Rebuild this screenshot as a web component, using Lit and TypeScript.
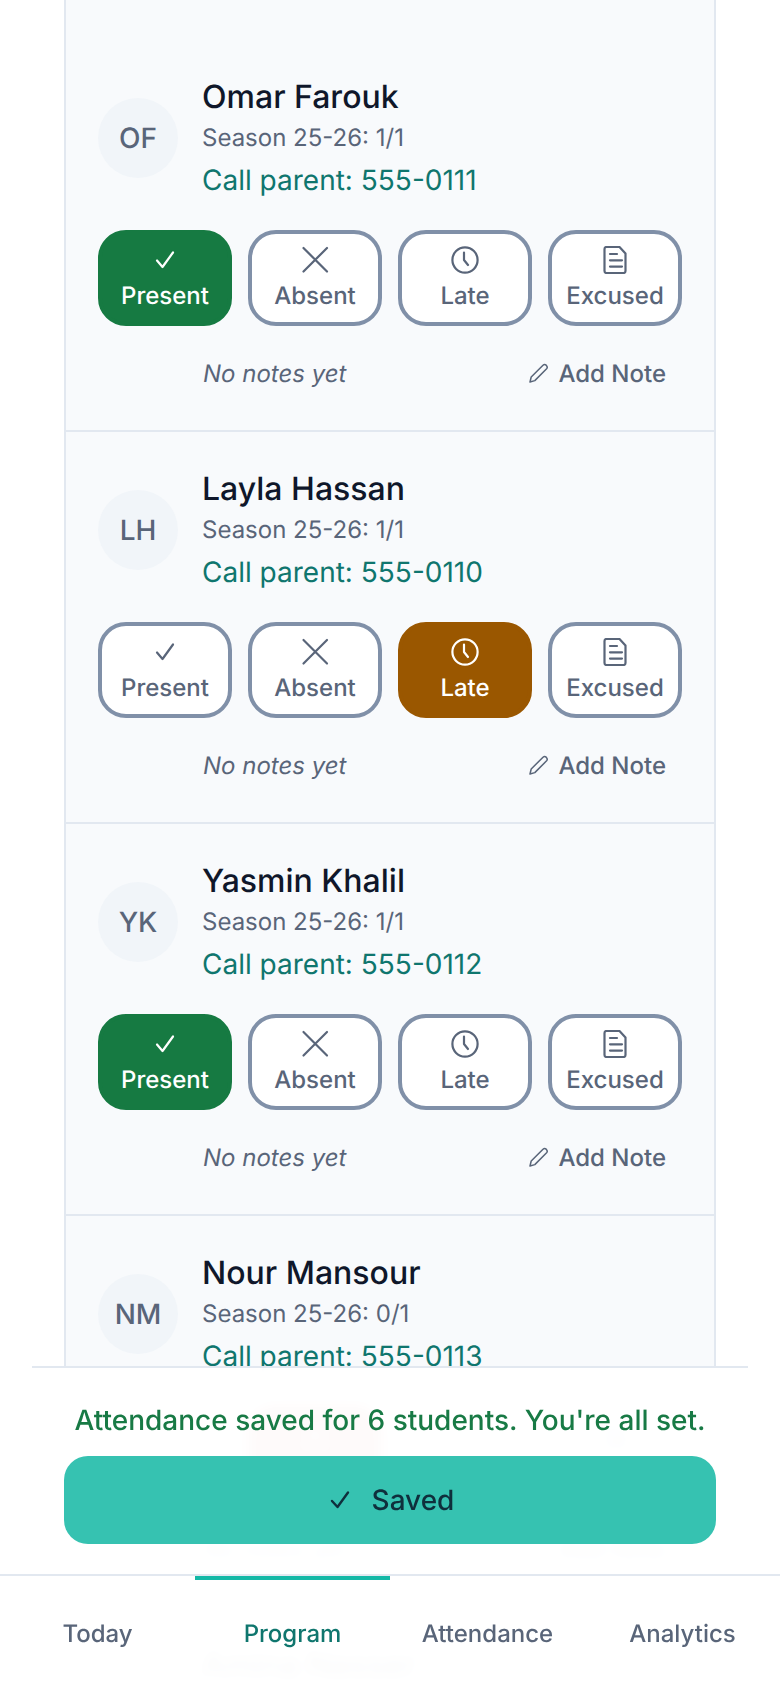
import { LitElement, html, css, svg } from "lit";
import { customElement } from "lit/decorators.js";

type Status = "present" | "absent" | "late" | "excused";
interface Student { name: string; initials: string; season: string; phone: string; status: Status | null; }

const STUDENTS: Student[] = [
  { name: "Omar Farouk", initials: "OF", season: "1/1", phone: "555-0111", status: "present" },
  { name: "Layla Hassan", initials: "LH", season: "1/1", phone: "555-0110", status: "late" },
  { name: "Yasmin Khalil", initials: "YK", season: "1/1", phone: "555-0112", status: "present" },
  { name: "Nour Mansour", initials: "NM", season: "0/1", phone: "555-0113", status: "absent" },
  { name: "Amina Nasser", initials: "AN", season: "1/1", phone: "555-0114", status: "present" },
];

const ICONS: Record<Status, unknown> = {
  present: svg`<path d="M6 14.5 L11.5 21 L22 6.5" />`,
  absent: svg`<path d="M2.5 2 L26 25.5 M26 2 L2.5 25.5" />`,
  late: svg`<circle cx="14" cy="14" r="12.6" /><path d="M13 6.5 V14 L17 19" />`,
  excused: svg`<path d="M5.5 1 H18.5 L24.5 7.5 V25 Q24.5 27 22.5 27 H5.5 Q3.5 27 3.5 25 V3 Q3.5 1 5.5 1 Z M9 8 H16 M9 14.3 H21 M9 20.6 H21" />`,
};

const OPTIONS: { key: Status; label: string }[] = [
  { key: "present", label: "Present" },
  { key: "absent", label: "Absent" },
  { key: "late", label: "Late" },
  { key: "excused", label: "Excused" },
];

@customElement("app-root")
export class AppRoot extends LitElement {
  static styles = css`
    :host {
      display: block;
      position: relative;
      height: 1688px;
      overflow: hidden;
      background: #ffffff;
      font-family: Inter, "Noto Sans", sans-serif;
      color: #0f172a;
      text-rendering: geometricPrecision;
    }
    .main { padding: 0 64px; }
    .card {
      background: #f8fafc;
      border-left: 2px solid #e2e8f0;
      border-right: 2px solid #e2e8f0;
      padding-top: 40px;
    }
    .row {
      height: 392px;
      box-sizing: border-box;
      padding: 32px 32px 0;
      border-bottom: 2px solid #e2e8f0;
    }
    .head { display: flex; align-items: center; gap: 24px; height: 131px; }
    .avatar {
      width: 80px; height: 80px; border-radius: 50%;
      background: #f1f5f9;
      color: #596579;
      font-size: 28px; font-weight: 500;
      display: flex; align-items: center; justify-content: center;
      flex: none;
    }
    .info { display: flex; flex-direction: column; }
    .name { font-size: 32px; font-weight: 500; line-height: 46px; margin-bottom: 2px; color: #0f172a; }
    .season { font-size: 24px; line-height: 32px; color: #596579; }
    .phone { font-size: 28px; line-height: 42px; margin-top: 5px; color: #0f766e; }
    .options { display: flex; gap: 16px; margin-top: 27px; }
    .opt {
      flex: 1 1 0;
      height: 96px;
      box-sizing: border-box;
      border: 4px solid #8090a8;
      border-radius: 28px;
      background: #ffffff;
      color: #596579;
      font-size: 24px;
      font-weight: 500;
      display: flex; flex-direction: column; align-items: center; justify-content: flex-start;
      padding-top: 12px;
    }
    .opt .ic { width: 28px; height: 28px; display: block; fill: none; stroke: currentColor; stroke-width: 2.2; stroke-linecap: round; stroke-linejoin: round; }
    .opt .lbl { line-height: 30px; margin-top: 7px; }
    .opt.present { background: #167a42; border-color: #167a42; color: #ffffff; }
    .opt.late { background: #9a5700; border-color: #9a5700; color: #ffffff; }
    .opt.absent { background: #b91c1c; border-color: #b91c1c; color: #ffffff; }
    .notes {
      display: flex; align-items: center; justify-content: space-between;
      margin: 22px 16px 0 105px;
      height: 50px;
    }
    .none { font-size: 24px; font-style: italic; color: #596579; }
    .add { display: flex; align-items: center; gap: 9px; font-size: 24px; font-weight: 500; color: #596579; }
    .add svg { width: 20px; height: 20px; fill: none; stroke: currentColor; stroke-width: 1.5; stroke-linecap: round; stroke-linejoin: round; }
    .dock {
      position: absolute; left: 0; right: 0; bottom: 0;
      display: flex; flex-direction: column;
    }
    .save {
      margin: 0 32px;
      padding: 0 32px;
      height: 208px;
      box-sizing: border-box;
      border-top: 2px solid #e2e8f0;
      background: rgba(255, 255, 255, 0.98);
      backdrop-filter: blur(6px);
      display: flex; flex-direction: column; align-items: center;
    }
    .saved-msg { font-size: 28px; font-weight: 500; line-height: 36px; margin-top: 34px; color: #187a45; white-space: nowrap; }
    .save-btn {
      margin-top: 18px;
      width: 100%; height: 88px;
      box-sizing: border-box;
      padding-left: 4px;
      border-radius: 24px;
      background: #36c2b1;
      color: #0f2f3c;
      font-size: 28px; font-weight: 500;
      display: flex; align-items: center; justify-content: center; gap: 22px;
    }
    .save-btn svg { width: 20px; height: 20px; fill: none; stroke: currentColor; stroke-width: 2.4; stroke-linecap: round; stroke-linejoin: round; }
    .nav {
      height: 114px;
      box-sizing: border-box;
      border-top: 2px solid #e2e8f0;
      padding-top: 2px;
      background: rgba(255, 255, 255, 0.98);
      backdrop-filter: blur(6px);
      display: grid; grid-template-columns: repeat(4, 1fr);
    }
    .tab {
      position: relative;
      display: flex; align-items: center; justify-content: center;
      font-size: 24px; font-weight: 500; color: #596579;
    }
    .tab.active { color: #0f766e; }
    .tab.active::before {
      content: ""; position: absolute; left: 0; right: 0; top: -2px; height: 4px; background: #14b8a6;
    }
  `;

  private renderRow(s: Student) {
    return html`
      <div class="row">
        <div class="head">
          <div class="avatar">${s.initials}</div>
          <div class="info">
            <div class="name">${s.name}</div>
            <div class="season">Season 25-26: ${s.season}</div>
            <div class="phone">Call parent: ${s.phone}</div>
          </div>
        </div>
        <div class="options">
          ${OPTIONS.map(
            (o) => html`
              <div class="opt ${s.status === o.key ? o.key : ""}">
                <svg class="ic" viewBox="0 0 28 28">${ICONS[o.key]}</svg>
                <span class="lbl">${o.label}</span>
              </div>
            `
          )}
        </div>
        <div class="notes">
          <span class="none">No notes yet</span>
          <span class="add">
            <svg viewBox="0 0 20 20"><path d="M1 19 L2.2 14 L14 2.2 Q15.6 0.8 17.4 2.4 Q19 4.2 17.6 5.8 L5.8 17.6 Z" /></svg>
            Add Note
          </span>
        </div>
      </div>
    `;
  }

  render() {
    return html`
      <div class="main">
        <div class="card">${STUDENTS.map((s) => this.renderRow(s))}</div>
      </div>
      <div class="dock">
        <div class="save">
          <div class="saved-msg">Attendance saved for 6 students. You're all set.</div>
          <div class="save-btn">
            <svg viewBox="0 0 20 20"><path d="M2 11 L7.5 17 L18 2.5" /></svg>
            Saved
          </div>
        </div>
        <div class="nav">
          <div class="tab">Today</div>
          <div class="tab active">Program</div>
          <div class="tab">Attendance</div>
          <div class="tab">Analytics</div>
        </div>
      </div>
    `;
  }
}
